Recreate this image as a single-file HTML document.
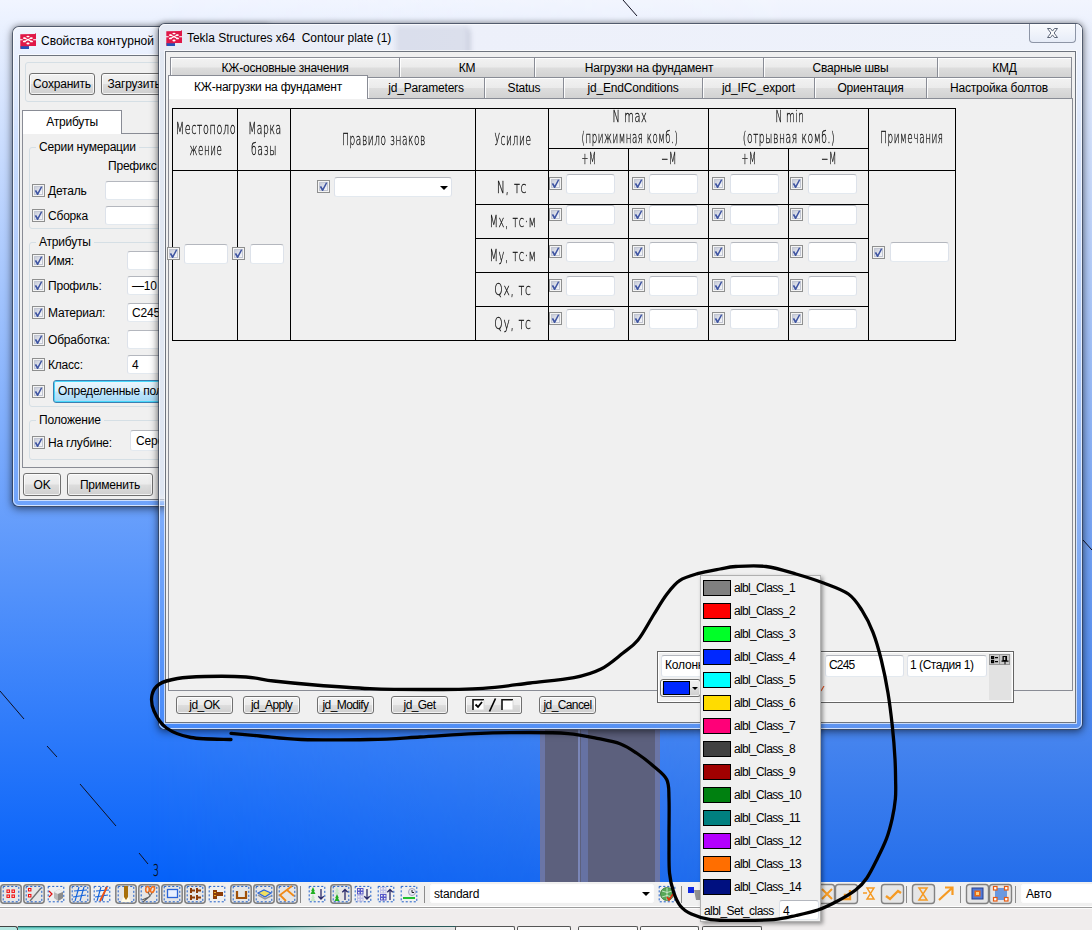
<!DOCTYPE html><html lang="ru"><head><meta charset="utf-8"><title>Tekla Structures</title><style>
html,body{margin:0;padding:0}
body{width:1092px;height:930px;overflow:hidden;position:relative;background:#f0eded;
 font-family:"Liberation Sans",sans-serif;font-size:12px;color:#000;letter-spacing:-0.2px}
.a{position:absolute;box-sizing:border-box}
.t{position:absolute;white-space:nowrap;line-height:14px}
#view{left:0;top:0;width:1092px;height:882px;background:linear-gradient(#f1f5ff,#0561f9)}
.win{border:1px solid rgba(30,40,60,.75);border-radius:7px 7px 6px 6px;
 box-shadow:0 2px 9px 0 rgba(0,0,0,.5),0 -1px 5px rgba(0,0,0,.18)}
.glass{border-radius:6px;border:1px solid rgba(255,255,255,.7)}
.client{background:#f0f0f0;border:1px solid #6e747e;box-shadow:0 0 0 1px rgba(255,255,255,.65)}
.cb{position:absolute;box-sizing:border-box;width:13px;height:13px;border:1px solid #8e8f8f;
 background:linear-gradient(135deg,#c9cdda 20%,#f6f7fa 80%);box-shadow:inset 0 0 0 1px #f4f4f4, inset 0 0 0 2px #c2c6d2}
.cb:after{content:"";position:absolute;left:0;top:0;width:11px;height:11px;background:#3f55a2;clip-path:polygon(1.7px 5.8px,3.2px 5px,4.7px 7.6px,7.9px 1.5px,9.4px 1.7px,5.1px 10px,4.1px 10px)}
.in{position:absolute;box-sizing:border-box;background:#fff;border:1px solid #dde2ea;border-top-color:#b4b7be;border-bottom-color:#e3e9ef;border-radius:3px}
.btn{position:absolute;box-sizing:border-box;border:1px solid #707070;border-radius:3px;
 background:linear-gradient(#f2f2f2 0,#ebebeb 48%,#dddddd 52%,#cfcfcf 100%);box-shadow:inset 0 0 0 1px rgba(255,255,255,.75);
 text-align:center;white-space:nowrap}
.tab{position:absolute;box-sizing:border-box;border:1px solid #898c95;border-bottom:none;
 background:linear-gradient(#f2f2f2 0,#ebebeb 48%,#dddddd 52%,#d2d2d2 100%);text-align:center;white-space:nowrap;line-height:21px;box-shadow:inset 1px 1px 0 rgba(255,255,255,.9)}
.tabsel{background:#fff;border-color:#898c95}
.g{font-family:"Liberation Sans",sans-serif;letter-spacing:0;color:#222}
.gt{position:absolute;white-space:nowrap;text-align:center;line-height:16px;font-family:"DejaVu Sans","Liberation Sans",sans-serif;font-weight:200;font-size:15.5px;letter-spacing:1px;color:#000;-webkit-text-stroke:.3px #1a1a1a;
 transform:scaleX(.62);transform-origin:50% 50%}
.ln{position:absolute;background:#000}
.grp{position:absolute;box-sizing:border-box;border:1px solid #d5dfe5;border-radius:3px}
.sw{position:absolute;box-sizing:border-box;border:1px solid #000;width:28px;height:16px}
</style></head><body>
<div id="view" class="a"></div>
<div class="a" style="left:0;top:0;width:1092px;height:882px;background:linear-gradient(#f2f5fe,#246eeb);-webkit-mask-image:linear-gradient(90deg,transparent 150px,#000 800px);mask-image:linear-gradient(90deg,transparent 150px,#000 800px)"></div>
<svg class="a" style="left:0;top:0" width="1092" height="882" viewBox="0 0 1092 882"><g stroke="#101020" stroke-width="1" fill="none"><path d="M623 0L637 16"/><path d="M0 691L24 719"/><path d="M47 746L57 757"/><path d="M80 784L116 826"/><path d="M139 853L148 864"/><path d="M1083 540L1092 550"/></g><rect x="540" y="729" width="120" height="153" fill="#5c607d"/><rect x="540" y="729" width="5" height="153" fill="#6a75a6"/><rect x="655" y="729" width="5" height="153" fill="#6a75a6"/><rect x="578" y="729" width="2" height="153" fill="#7a86b8"/><rect x="581" y="729" width="7" height="153" fill="#6672a3"/><text x="153" y="876" font-family="DejaVu Sans,Liberation Sans,sans-serif" font-weight="200" font-size="15" fill="#000" stroke="#111" stroke-width=".3" transform="translate(153 0) scale(.62 1) translate(-153 0)">3</text></svg>
<div class="a win" style="left:12px;top:26px;width:260px;height:481px;background:linear-gradient(rgba(255,255,255,.3),rgba(255,255,255,.06) 120px,rgba(255,255,255,.04))"></div>
<div class="a glass" style="left:13px;top:27px;width:258px;height:479px"></div>
<svg class="a" style="left:20px;top:33px" width="17" height="17" viewBox="0 0 17 17"><path d="M0.300 1.200 L15 1 L15.700 0 L16 0.500 L16 13 L9 13 L9 16 L0.300 16 Z" fill="#e01848"/><path d="M0.300 13.200 H9 V16 H1 Z" fill="#2450b8"/><path d="M0 6.700H2.700M13.200 6.700H16M4.400 5.100L11.500 8.400M11.400 5.100L4.400 8.400" stroke="#fff" stroke-width="1.100" fill="none"/><g fill="#fff"><ellipse cx="8" cy="3.500" rx="1.600" ry=".85"/><ellipse cx="4.400" cy="5.100" rx="1.500" ry=".85"/><ellipse cx="11.400" cy="5.100" rx="1.500" ry=".85"/><ellipse cx="4.400" cy="8.400" rx="1.500" ry=".85"/><ellipse cx="11.500" cy="8.400" rx="1.500" ry=".85"/><ellipse cx="8" cy="10.500" rx="1.600" ry=".9"/></g></svg>
<div class="t" style="left:41px;top:34px;letter-spacing:0">Свойства контурной</div>
<div class="a client" style="left:19px;top:55px;width:246px;height:445px"></div>
<div class="grp" style="left:25px;top:62px;width:240px;height:40px"></div>
<div class="btn" style="left:29px;top:73px;width:66px;height:22px;line-height:21px">Сохранить</div>
<div class="btn" style="left:101px;top:73px;width:66px;height:22px;line-height:21px">Загрузить</div>
<div class="a" style="left:22px;top:133px;width:243px;height:335px;border:1px solid #898c95"></div>
<div class="tab tabsel" style="left:22px;top:110px;width:100px;height:24px;line-height:22px">Атрибуты</div>
<div class="grp" style="left:29px;top:147px;width:236px;height:82px"></div>
<div class="t" style="left:36px;top:140px;background:#f0f0f0;padding:0 3px">Серии нумерации</div>
<div class="t" style="left:108px;top:159px">Префикс</div>
<div class="cb" style="left:32px;top:184px"></div><div class="t" style="left:48px;top:184px">Деталь</div><div class="in" style="left:105px;top:181px;width:160px;height:19px"></div>
<div class="cb" style="left:32px;top:209px"></div><div class="t" style="left:48px;top:209px">Сборка</div><div class="in" style="left:105px;top:206px;width:160px;height:19px"></div>
<div class="grp" style="left:29px;top:242px;width:236px;height:165px"></div>
<div class="t" style="left:36px;top:235px;background:#f0f0f0;padding:0 3px">Атрибуты</div>
<div class="cb" style="left:32px;top:254px"></div><div class="t" style="left:48px;top:254px">Имя:</div>
<div class="in" style="left:127px;top:251px;width:140px;height:19px"></div><div class="t" style="left:132px;top:254px"></div>
<div class="cb" style="left:32px;top:279px"></div><div class="t" style="left:48px;top:279px">Профиль:</div>
<div class="in" style="left:127px;top:276px;width:140px;height:19px"></div><div class="t" style="left:132px;top:279px">—10</div>
<div class="cb" style="left:32px;top:306px"></div><div class="t" style="left:48px;top:306px">Материал:</div>
<div class="in" style="left:127px;top:303px;width:140px;height:19px"></div><div class="t" style="left:132px;top:306px">C245</div>
<div class="cb" style="left:32px;top:333px"></div><div class="t" style="left:48px;top:333px">Обработка:</div>
<div class="in" style="left:127px;top:330px;width:140px;height:19px"></div><div class="t" style="left:132px;top:333px"></div>
<div class="cb" style="left:32px;top:358px"></div><div class="t" style="left:48px;top:358px">Класс:</div>
<div class="in" style="left:127px;top:355px;width:140px;height:19px"></div><div class="t" style="left:132px;top:358px">4</div>
<div class="cb" style="left:32px;top:385px"></div>
<div class="btn" style="left:53px;top:380px;width:140px;height:23px;line-height:21px;text-align:left;padding-left:4px;border-color:#3c7fb1;background:linear-gradient(#eaf6fd 0,#d9f0fc 48%,#bee6fd 52%,#a7d9f5 100%);box-shadow:inset 0 0 0 1px #48d8fb">Определенные пользователем</div>
<div class="grp" style="left:29px;top:420px;width:236px;height:40px"></div>
<div class="t" style="left:36px;top:413px;background:#f0f0f0;padding:0 3px">Положение</div>
<div class="cb" style="left:32px;top:436px"></div><div class="t" style="left:48px;top:436px">На глубине:</div>
<div class="in" style="left:130px;top:430px;width:135px;height:21px"></div><div class="t" style="left:136px;top:434px">Середина</div>
<div class="btn" style="left:23px;top:473px;width:38px;height:23px;line-height:23px">OK</div>
<div class="btn" style="left:67px;top:473px;width:86px;height:23px;line-height:23px">Применить</div>
<div class="a win" style="left:158px;top:23px;width:925px;height:707px;background:linear-gradient(rgba(255,255,255,.35),rgba(255,255,255,.18) 120px,rgba(255,255,255,.12))"></div>
<div class="a" style="left:159px;top:24px;width:923px;height:28px;border-radius:6px 6px 0 0;background:linear-gradient(90deg,#e6eaf4 0,#e9edf7 120px,#edf0fa 300px,#eef2fb)"></div>
<div class="a" style="left:396px;top:26px;width:74px;height:30px;border-radius:0 7px 0 0;background:rgba(120,130,160,.15);border-right:2px solid rgba(90,100,130,.3);filter:blur(2.5px)"></div>
<div class="a" style="left:159px;top:52px;width:7px;height:455px;background:linear-gradient(#e2e8f2 0,#dfe6f2 97%,rgba(223,230,242,0))"></div>
<div class="a glass" style="left:159px;top:24px;width:923px;height:705px"></div>
<svg class="a" style="left:166px;top:30px" width="17" height="17" viewBox="0 0 17 17"><path d="M0.300 1.200 L15 1 L15.700 0 L16 0.500 L16 13 L9 13 L9 16 L0.300 16 Z" fill="#e01848"/><path d="M0.300 13.200 H9 V16 H1 Z" fill="#2450b8"/><path d="M0 6.700H2.700M13.200 6.700H16M4.400 5.100L11.500 8.400M11.400 5.100L4.400 8.400" stroke="#fff" stroke-width="1.100" fill="none"/><g fill="#fff"><ellipse cx="8" cy="3.500" rx="1.600" ry=".85"/><ellipse cx="4.400" cy="5.100" rx="1.500" ry=".85"/><ellipse cx="11.400" cy="5.100" rx="1.500" ry=".85"/><ellipse cx="4.400" cy="8.400" rx="1.500" ry=".85"/><ellipse cx="11.500" cy="8.400" rx="1.500" ry=".85"/><ellipse cx="8" cy="10.500" rx="1.600" ry=".9"/></g></svg>
<div class="t" style="left:187px;top:31px;letter-spacing:-.03px">Tekla Structures x64&nbsp; Contour plate (1)</div>
<div class="a" style="left:1029px;top:24px;width:47px;height:19px;border:1px solid #8d95a6;border-top:none;border-radius:0 0 4px 4px;background:linear-gradient(rgba(255,255,255,.7),rgba(225,232,245,.6))"></div>
<svg class="a" style="left:1046px;top:27px" width="13" height="12" viewBox="0 0 13 12"><path d="M1.5 1.5h3l2 2.6 2-2.6h3l-3.4 4.5 3.4 4.5h-3l-2-2.6-2 2.6h-3l3.400-4.500z" fill="#fff" stroke="#5d6678" stroke-width="1"/></svg>
<div class="a client" style="left:165px;top:51px;width:911px;height:672px"></div>
<div class="tab" style="left:170px;top:57px;width:230px;height:20px">КЖ-основные значения</div>
<div class="tab" style="left:399px;top:57px;width:136px;height:20px">КМ</div>
<div class="tab" style="left:534px;top:57px;width:230px;height:20px">Нагрузки на фундамент</div>
<div class="tab" style="left:763px;top:57px;width:175px;height:20px">Сварные швы</div>
<div class="tab" style="left:937px;top:57px;width:135px;height:20px">КМД</div>
<div class="tab" style="left:367px;top:77px;width:118px;height:21px">jd_Parameters</div>
<div class="tab" style="left:484px;top:77px;width:80px;height:21px">Status</div>
<div class="tab" style="left:563px;top:77px;width:140px;height:21px">jd_EndConditions</div>
<div class="tab" style="left:702px;top:77px;width:113px;height:21px">jd_IFC_export</div>
<div class="tab" style="left:814px;top:77px;width:113px;height:21px">Ориентация</div>
<div class="tab" style="left:926px;top:77px;width:146px;height:21px">Настройка болтов</div>
<div class="a" style="left:168px;top:98px;width:905px;height:593px;border:1px solid #898c95"></div>
<div class="tab tabsel" style="left:168px;top:75px;width:200px;height:24px;line-height:22px">КЖ-нагрузки на фундамент</div>
<div class="ln" style="left:172px;top:108px;width:784px;height:1px"></div>
<div class="ln" style="left:548px;top:148px;width:321px;height:1px"></div>
<div class="ln" style="left:172px;top:170px;width:784px;height:1px"></div>
<div class="ln" style="left:172px;top:340px;width:784px;height:1px"></div>
<div class="ln" style="left:475px;top:204px;width:394px;height:1px"></div>
<div class="ln" style="left:475px;top:238px;width:394px;height:1px"></div>
<div class="ln" style="left:475px;top:272px;width:394px;height:1px"></div>
<div class="ln" style="left:475px;top:306px;width:394px;height:1px"></div>
<div class="ln" style="left:172px;top:108px;width:1px;height:233px"></div>
<div class="ln" style="left:237px;top:108px;width:1px;height:233px"></div>
<div class="ln" style="left:290px;top:108px;width:1px;height:233px"></div>
<div class="ln" style="left:475px;top:108px;width:1px;height:233px"></div>
<div class="ln" style="left:548px;top:108px;width:1px;height:233px"></div>
<div class="ln" style="left:708px;top:108px;width:1px;height:233px"></div>
<div class="ln" style="left:868px;top:108px;width:1px;height:233px"></div>
<div class="ln" style="left:955px;top:108px;width:1px;height:233px"></div>
<div class="ln" style="left:628px;top:148px;width:1px;height:193px"></div>
<div class="ln" style="left:788px;top:148px;width:1px;height:193px"></div>
<div class="gt" style="left:55.7px;top:121px;width:300px;transform:scaleX(0.622)">Местополо</div>
<div class="gt" style="left:55.7px;top:142px;width:300px;transform:scaleX(0.562)">жение</div>
<div class="gt" style="left:114.5px;top:121px;width:300px;transform:scaleX(0.595)">Марка</div>
<div class="gt" style="left:113.9px;top:142px;width:300px;transform:scaleX(0.606)">базы</div>
<div class="gt" style="left:233.7px;top:132px;width:300px;transform:scaleX(0.579)">Правило знаков</div>
<div class="gt" style="left:363.3px;top:132px;width:300px;transform:scaleX(0.582)">Усилие</div>
<div class="gt" style="left:480.1px;top:109px;width:300px;transform:scaleX(0.630)">N max</div>
<div class="gt" style="left:479.5px;top:130px;width:300px;transform:scaleX(0.557)">(прижимная комб.)</div>
<div class="gt" style="left:639.5px;top:109px;width:300px;transform:scaleX(0.573)">N min</div>
<div class="gt" style="left:638.9px;top:130px;width:300px;transform:scaleX(0.596)">(отрывная комб.)</div>
<div class="gt" style="left:439.4px;top:151px;width:300px;transform:scaleX(0.526)">+М</div>
<div class="gt" style="left:518.8px;top:151px;width:300px;transform:scaleX(0.555)">−М</div>
<div class="gt" style="left:598.6px;top:151px;width:300px;transform:scaleX(0.526)">+М</div>
<div class="gt" style="left:679.3px;top:151px;width:300px;transform:scaleX(0.555)">−М</div>
<div class="gt" style="left:761.9px;top:130px;width:300px;transform:scaleX(0.570)">Примечания</div>
<div class="gt" style="left:362.3px;top:180px;width:300px;transform:scaleX(0.699)">N, тс</div>
<div class="gt" style="left:363.1px;top:214px;width:300px;transform:scaleX(0.636)">Mx, тс·м</div>
<div class="gt" style="left:363.1px;top:248px;width:300px;transform:scaleX(0.636)">My, тс·м</div>
<div class="gt" style="left:363.3px;top:282px;width:300px;transform:scaleX(0.687)">Qx, тс</div>
<div class="gt" style="left:363.3px;top:316px;width:300px;transform:scaleX(0.687)">Qy, тс</div>
<div class="cb" style="left:167px;top:247px"></div><div class="in" style="left:184px;top:244px;width:44px;height:20px"></div>
<div class="cb" style="left:232px;top:247px"></div><div class="in" style="left:250px;top:244px;width:34px;height:20px"></div>
<div class="cb" style="left:317px;top:180px"></div><div class="in" style="left:334px;top:177px;width:118px;height:20px"></div>
<div class="a" style="left:439.5px;top:186px;width:0;height:0;border:4px solid transparent;border-top:4px solid #000;border-bottom:none"></div>
<div class="cb" style="left:549px;top:177px"></div><div class="in" style="left:566px;top:174px;width:49px;height:20px"></div>
<div class="cb" style="left:632px;top:177px"></div><div class="in" style="left:649px;top:174px;width:49px;height:20px"></div>
<div class="cb" style="left:712px;top:177px"></div><div class="in" style="left:730px;top:174px;width:49px;height:20px"></div>
<div class="cb" style="left:790px;top:177px"></div><div class="in" style="left:808px;top:174px;width:49px;height:20px"></div>
<div class="cb" style="left:549px;top:208px"></div><div class="in" style="left:566px;top:205px;width:49px;height:20px"></div>
<div class="cb" style="left:632px;top:208px"></div><div class="in" style="left:649px;top:205px;width:49px;height:20px"></div>
<div class="cb" style="left:712px;top:208px"></div><div class="in" style="left:730px;top:205px;width:49px;height:20px"></div>
<div class="cb" style="left:790px;top:208px"></div><div class="in" style="left:808px;top:205px;width:49px;height:20px"></div>
<div class="cb" style="left:549px;top:245px"></div><div class="in" style="left:566px;top:242px;width:49px;height:20px"></div>
<div class="cb" style="left:632px;top:245px"></div><div class="in" style="left:649px;top:242px;width:49px;height:20px"></div>
<div class="cb" style="left:712px;top:245px"></div><div class="in" style="left:730px;top:242px;width:49px;height:20px"></div>
<div class="cb" style="left:790px;top:245px"></div><div class="in" style="left:808px;top:242px;width:49px;height:20px"></div>
<div class="cb" style="left:549px;top:279px"></div><div class="in" style="left:566px;top:276px;width:49px;height:20px"></div>
<div class="cb" style="left:632px;top:279px"></div><div class="in" style="left:649px;top:276px;width:49px;height:20px"></div>
<div class="cb" style="left:712px;top:279px"></div><div class="in" style="left:730px;top:276px;width:49px;height:20px"></div>
<div class="cb" style="left:790px;top:279px"></div><div class="in" style="left:808px;top:276px;width:49px;height:20px"></div>
<div class="cb" style="left:549px;top:312px"></div><div class="in" style="left:566px;top:309px;width:49px;height:20px"></div>
<div class="cb" style="left:632px;top:312px"></div><div class="in" style="left:649px;top:309px;width:49px;height:20px"></div>
<div class="cb" style="left:712px;top:312px"></div><div class="in" style="left:730px;top:309px;width:49px;height:20px"></div>
<div class="cb" style="left:790px;top:312px"></div><div class="in" style="left:808px;top:309px;width:49px;height:20px"></div>
<div class="cb" style="left:872px;top:246px"></div><div class="in" style="left:890px;top:242px;width:59px;height:20px"></div>
<div class="btn" style="left:176px;top:696px;width:57px;height:18px;line-height:17px;border-radius:3px;letter-spacing:-.6px">jd_OK</div>
<div class="btn" style="left:243px;top:696px;width:57px;height:18px;line-height:17px;border-radius:3px;letter-spacing:-.6px">jd_Apply</div>
<div class="btn" style="left:317px;top:696px;width:57px;height:18px;line-height:17px;border-radius:3px;letter-spacing:-.6px">jd_Modify</div>
<div class="btn" style="left:391px;top:696px;width:57px;height:18px;line-height:17px;border-radius:3px;letter-spacing:-.6px">jd_Get</div>
<div class="btn" style="left:539px;top:696px;width:57px;height:18px;line-height:17px;border-radius:3px;letter-spacing:-.6px">jd_Cancel</div>
<div class="btn" style="left:465px;top:696px;width:57px;height:18px;border-radius:2px"></div>
<svg class="a" style="left:465px;top:696px" width="57" height="18" viewBox="0 0 57 18"><rect x="8" y="3" width="11" height="11" fill="#fff"/><path d="M8 14V3.700H19" stroke="#111" stroke-width="1.600" fill="none"/><path d="M19 4V14H9" stroke="#d8d8d8" stroke-width="1" fill="none"/><path d="M10.500 8.500l2.500 2.500 4-5" stroke="#000" stroke-width="1.800" fill="none"/><path d="M24.500 15.500L30.500 2.500" stroke="#000" stroke-width="1.700"/><rect x="37" y="3" width="11" height="11" fill="#fff"/><path d="M37 14V3.700H48" stroke="#111" stroke-width="1.600" fill="none"/><path d="M48 4V14H38" stroke="#d8d8d8" stroke-width="1" fill="none"/></svg>
<div class="a" style="left:657px;top:651px;width:357px;height:52px;background:#f0f0f0;border:1px solid #646464;box-shadow:inset 0 0 0 1px #fff"></div>
<div class="in" style="left:661px;top:655px;width:160px;height:22px"></div><div class="t" style="left:665px;top:658px">Колонна</div>
<div class="in" style="left:825px;top:655px;width:79px;height:22px"></div><div class="t" style="left:829px;top:658px;letter-spacing:-.8px">C245</div>
<div class="in" style="left:907px;top:655px;width:80px;height:22px"></div><div class="t" style="left:910px;top:658px;letter-spacing:-.45px">1 (Стадия 1)</div>
<div class="a" style="left:989px;top:654px;width:22px;height:46px;background:#e2e2e2"></div>
<svg class="a" style="left:989px;top:654px" width="22" height="12" viewBox="0 0 22 12"><rect x=".5" y=".5" width="10" height="10" fill="#c8c8c8" stroke="#969696"/><rect x="10.500" y=".5" width="10" height="10" fill="#c8c8c8" stroke="#969696"/><g fill="none" stroke="#000" stroke-width="1.200"><rect x="2.600" y="2.600" width="2" height="2"/><rect x="2.600" y="6.600" width="2" height="2"/><path d="M6 3.600h3M6 7.600h3"/></g><path d="M13.500 2h4.500v4.500h1.500v1.200h-3v2.500h-1v-2.500h-3v-1.200h1z" fill="#000"/><rect x="14.800" y="3" width="1.500" height="3" fill="#c8c8c8"/></svg>
<div class="btn" style="left:660px;top:679px;width:41px;height:18px;border-radius:3px"></div>
<div class="a" style="left:663px;top:681px;width:27px;height:14px;background:#0028ff;border:1px solid #000"></div>
<div class="a" style="left:692px;top:687px;width:0;height:0;border:3px solid transparent;border-top:3px solid #000;border-bottom:none"></div>
<svg class="a" style="left:821px;top:686px" width="4" height="6" viewBox="0 0 4 6"><path d="M0 5L3 0" stroke="#e05020" stroke-width="1.100"/></svg>
<div class="a" style="left:0;top:882px;width:1092px;height:24px;background:#f0f0f0"></div>
<div class="a" style="left:0;top:906px;width:1092px;height:1px;background:#fff"></div>
<div class="a" style="left:0;top:907px;width:1092px;height:1px;background:#9c9c9c"></div>
<div class="a" style="left:0;top:908px;width:1092px;height:1px;background:#fbfbfb"></div>
<div class="a" style="left:18px;top:926px;width:440px;height:4px;background:linear-gradient(90deg,rgba(240,237,237,0) 0,rgba(240,237,237,0) 55%,#d8d8d8 72%,#e6e6e6 100%),linear-gradient(#3a9a96 0,#72d2c8 35%,#96e2da);border-top:1px solid #2a5a5a"></div>
<div class="a" style="left:0;top:926px;width:18px;height:5px;background:#b4e6e0;border:1px solid #444;border-left:none;border-bottom:none;border-radius:0 3px 0 0"></div>
<div class="a" style="left:455px;top:926px;width:60px;height:5px;background:#fafafa;border:1px solid #555;border-bottom:none;border-radius:2px 2px 0 0"></div>
<div class="a" style="left:517px;top:926px;width:54px;height:5px;background:#fafafa;border:1px solid #555;border-bottom:none;border-radius:2px 2px 0 0"></div>
<div class="a" style="left:578px;top:926px;width:60px;height:5px;background:#fafafa;border:1px solid #555;border-bottom:none;border-radius:2px 2px 0 0"></div>
<div class="a" style="left:640px;top:926px;width:59px;height:5px;background:#fafafa;border:1px solid #555;border-bottom:none;border-radius:2px 2px 0 0"></div>
<div class="a" style="left:702px;top:926px;width:60px;height:5px;background:#fafafa;border:1px solid #555;border-bottom:none;border-radius:2px 2px 0 0"></div>
<svg class="a" style="left:0;top:882px" width="1092" height="24" viewBox="0 0 1092 24"><rect x="0.8" y="2.800" width="20.400" height="18.400" rx="3" fill="#e6e6e6" stroke="#808080" stroke-width="1.500"/><rect x="3.2" y="4.400" width="15.600" height="15.400" fill="none" stroke="#1458c8" stroke-width=".95" stroke-dasharray="2.100 1.900"/><g transform="translate(3 4)"><rect x="4.0" y="4.0" width="2.400" height="2.400" fill="#fff" stroke="#f01010" stroke-width="1.100"/><rect x="9.0" y="4.0" width="2.400" height="2.400" fill="#fff" stroke="#f01010" stroke-width="1.100"/><rect x="4.0" y="9.0" width="2.400" height="2.400" fill="#fff" stroke="#f01010" stroke-width="1.100"/><rect x="9.0" y="9.0" width="2.400" height="2.400" fill="#fff" stroke="#f01010" stroke-width="1.100"/></g><rect x="23.8" y="2.800" width="20.400" height="18.400" rx="3" fill="#e6e6e6" stroke="#808080" stroke-width="1.500"/><rect x="26.2" y="4.400" width="15.600" height="15.400" fill="none" stroke="#1458c8" stroke-width=".95" stroke-dasharray="2.100 1.900"/><g transform="translate(26 4)"><rect x="2.5" y="2.5" width="2.400" height="2.400" fill="#fff" stroke="#f01010" stroke-width="1.100"/><rect x="2.5" y="8.5" width="2.400" height="2.400" fill="#fff" stroke="#f01010" stroke-width="1.100"/><path d="M4 15L15 2" stroke="#707070" stroke-width="1.3"/></g><rect x="48.2" y="4.400" width="15.600" height="15.400" fill="none" stroke="#1458c8" stroke-width=".95" stroke-dasharray="2.100 1.900"/><g transform="translate(48 4)"><path d="M1 5l3 3-3 3" stroke="#e01010" stroke-width="1.2" fill="none"/><path d="M6 6l5-3 4 3v6l-5 3-4-3z" fill="#b8b8b8"/><path d="M6 6l5-3 4 3-5 2z" fill="#eee"/><path d="M10 8l5-2v6l-5 3z" fill="#8c8c8c"/></g><rect x="69.8" y="2.800" width="20.400" height="18.400" rx="3" fill="#e6e6e6" stroke="#808080" stroke-width="1.500"/><rect x="72.2" y="4.400" width="15.600" height="15.400" fill="none" stroke="#1458c8" stroke-width=".95" stroke-dasharray="2.100 1.900"/><g transform="translate(72 4)"><g stroke="#1464dc" stroke-width="1.150" fill="none"><path d="M7 1L3 15"/><path d="M12 1L8 15"/><path d="M2 5L15 4"/><path d="M1 11L14 9"/></g></g><rect x="94.2" y="4.400" width="15.600" height="15.400" fill="none" stroke="#1458c8" stroke-width=".95" stroke-dasharray="2.100 1.900"/><g transform="translate(94 4)"><g stroke="#1464dc" stroke-width="1.150" fill="none"><path d="M7 1L3 15"/><path d="M12 1L8 15"/><path d="M2 5L15 4"/><path d="M1 11L14 9"/></g><path d="M13 1L6 15" stroke="#f05010" stroke-width="1.8"/></g><rect x="115.8" y="2.800" width="20.400" height="18.400" rx="3" fill="#e6e6e6" stroke="#808080" stroke-width="1.500"/><rect x="118.2" y="4.400" width="15.600" height="15.400" fill="none" stroke="#1458c8" stroke-width=".95" stroke-dasharray="2.100 1.900"/><g transform="translate(118 4)"><path d="M3 16L6 10h4l3 6z" fill="#fffbe8"/><rect x="6" y="0" width="4" height="11" fill="#a87008"/><path d="M6 11h4l-2 3z" fill="#a87008"/></g><rect x="138.8" y="2.800" width="20.400" height="18.400" rx="3" fill="#e6e6e6" stroke="#808080" stroke-width="1.500"/><rect x="141.2" y="4.400" width="15.600" height="15.400" fill="none" stroke="#1458c8" stroke-width=".95" stroke-dasharray="2.100 1.900"/><g transform="translate(141 4)"><g fill="none" stroke="#f07020" stroke-width="1.6"><ellipse cx="6.500" cy="3.500" rx="1.800" ry="3"/><ellipse cx="11.500" cy="3.500" rx="1.800" ry="3" transform="rotate(20 11.500 3.500)"/></g><path d="M7 6L9 10L2 16M11 7L8 11L1 14" stroke="#606060" stroke-width="1.100" fill="none"/></g><rect x="161.8" y="2.800" width="20.400" height="18.400" rx="3" fill="#e6e6e6" stroke="#808080" stroke-width="1.500"/><rect x="164.2" y="4.400" width="15.600" height="15.400" fill="none" stroke="#1458c8" stroke-width=".95" stroke-dasharray="2.100 1.900"/><g transform="translate(164 4)"><rect x="3.500" y="3.500" width="10" height="8" fill="#e8f0ff" stroke="#2a64d8" stroke-width="1.300"/></g><rect x="184.8" y="2.800" width="20.400" height="18.400" rx="3" fill="#e6e6e6" stroke="#808080" stroke-width="1.500"/><rect x="187.2" y="4.400" width="15.600" height="15.400" fill="none" stroke="#1458c8" stroke-width=".95" stroke-dasharray="2.100 1.900"/><g transform="translate(187 4)"><g transform="translate(3 2)"><path d="M0 0h2v1.500h3v2h-3v1.500h-2z" fill="#8c3c08"/></g><g transform="translate(9 2)"><path d="M0 0h2v1.500h3v2h-3v1.500h-2z" fill="#8c3c08"/></g><g transform="translate(3 9)"><path d="M0 0h2v1.500h3v2h-3v1.500h-2z" fill="#8c3c08"/></g><g transform="translate(9 9)"><path d="M0 0h2v1.500h3v2h-3v1.500h-2z" fill="#8c3c08"/></g></g><rect x="209.2" y="4.400" width="15.600" height="15.400" fill="none" stroke="#1458c8" stroke-width=".95" stroke-dasharray="2.100 1.900"/><g transform="translate(209 4)"><path d="M4 4h4v2h6v4h-6v3h-4z" fill="#8c3c08"/><path d="M5 6h2v1h-2zM5 9h2v1h-2z" fill="#f0b020"/></g><rect x="230.8" y="2.800" width="20.400" height="18.400" rx="3" fill="#e6e6e6" stroke="#808080" stroke-width="1.500"/><rect x="233.2" y="4.400" width="15.600" height="15.400" fill="none" stroke="#1458c8" stroke-width=".95" stroke-dasharray="2.100 1.900"/><g transform="translate(233 4)"><path d="M4 5v7h9v-7" fill="none" stroke="#a05008" stroke-width="2.200"/></g><rect x="253.8" y="2.800" width="20.400" height="18.400" rx="3" fill="#e6e6e6" stroke="#808080" stroke-width="1.500"/><rect x="256.2" y="4.400" width="15.600" height="15.400" fill="none" stroke="#1458c8" stroke-width=".95" stroke-dasharray="2.100 1.900"/><g transform="translate(256 4)"><path d="M2 7l6-3 7 3-6 4z" fill="#f0e060" stroke="#2a64d8" stroke-width="1.200"/><path d="M2 9l7 4 6-3" stroke="#9a9a9a" stroke-width="1.500" fill="none"/></g><rect x="276.8" y="2.800" width="20.400" height="18.400" rx="3" fill="#e6e6e6" stroke="#808080" stroke-width="1.500"/><rect x="279.2" y="4.400" width="15.600" height="15.400" fill="none" stroke="#1458c8" stroke-width=".95" stroke-dasharray="2.100 1.900"/><g transform="translate(279 4)"><path d="M13 0L1 9l6 6M8 4l7 6" stroke="#f08a18" stroke-width="1.800" fill="none"/></g><rect x="300" y="4" width="1" height="17" fill="#8c8c8c"/><rect x="309.2" y="4.400" width="15.600" height="15.400" fill="none" stroke="#1458c8" stroke-width=".95" stroke-dasharray="2.100 1.900"/><g transform="translate(309 4)"><path d="M4 1 l1.800 4 h-0.800 l1.500 3 h-5 l1.500-3 h-0.800z" fill="#20b020"/><path d="M4 8 l1.800 4 h-0.800 l1.500 3 h-5 l1.500-3 h-0.800z" fill="#c8e8c8"/><path d="M12 3v10M9.300 10.200L12 13l2.700-2.800" stroke="#2a2a6a" stroke-width="1.300" fill="none"/></g><rect x="330.8" y="2.800" width="20.400" height="18.400" rx="3" fill="#e6e6e6" stroke="#808080" stroke-width="1.500"/><rect x="333.2" y="4.400" width="15.600" height="15.400" fill="none" stroke="#1458c8" stroke-width=".95" stroke-dasharray="2.100 1.900"/><g transform="translate(333 4)"><path d="M4 1 l1.800 4 h-0.800 l1.500 3 h-5 l1.500-3 h-0.800z" fill="#c8e8c8"/><path d="M4 8 l1.800 4 h-0.800 l1.500 3 h-5 l1.500-3 h-0.800z" fill="#20b020"/><path d="M12 14V3.500M9.300 6.300L12 3.500l2.700 2.800" stroke="#2a2a6a" stroke-width="1.300" fill="none"/></g><rect x="355.2" y="4.400" width="15.600" height="15.400" fill="none" stroke="#1458c8" stroke-width=".95" stroke-dasharray="2.100 1.900"/><g transform="translate(355 4)"><g fill="none" stroke="#5858c8" stroke-width="1"><rect x="2.500" y="2.5" width="2.500" height="2.500"/><rect x="5.500" y="2.5" width="2.500" height="2.500"/><rect x="2.500" y="5.5" width="2.500" height="2.500"/><rect x="5.500" y="5.5" width="2.500" height="2.500"/></g><g fill="none" stroke="#c0c0e8" stroke-width="1"><rect x="2.500" y="9.5" width="2.500" height="2.500"/><rect x="5.500" y="9.5" width="2.500" height="2.500"/><rect x="2.500" y="12.5" width="2.500" height="2.500"/><rect x="5.500" y="12.5" width="2.500" height="2.500"/></g><path d="M12 3v10M9.300 10.200L12 13l2.700-2.800" stroke="#2a2a6a" stroke-width="1.300" fill="none"/></g><rect x="378.2" y="4.400" width="15.600" height="15.400" fill="none" stroke="#1458c8" stroke-width=".95" stroke-dasharray="2.100 1.900"/><g transform="translate(378 4)"><g fill="none" stroke="#c0c0e8" stroke-width="1"><rect x="2.500" y="1.5" width="2.500" height="2.500"/><rect x="5.500" y="1.5" width="2.500" height="2.500"/><rect x="2.500" y="4.5" width="2.500" height="2.500"/><rect x="5.500" y="4.5" width="2.500" height="2.500"/></g><g fill="none" stroke="#5858c8" stroke-width="1"><rect x="2.500" y="8.5" width="2.500" height="2.500"/><rect x="5.500" y="8.5" width="2.500" height="2.500"/><rect x="2.500" y="11.5" width="2.500" height="2.500"/><rect x="5.500" y="11.5" width="2.500" height="2.500"/></g><path d="M12 14V3.500M9.300 6.300L12 3.500l2.700 2.800" stroke="#2a2a6a" stroke-width="1.300" fill="none"/></g><rect x="401.2" y="4.400" width="15.600" height="15.400" fill="none" stroke="#1458c8" stroke-width=".95" stroke-dasharray="2.100 1.900"/><g transform="translate(401 4)"><rect x="2" y="11" width="12" height="2" fill="#20c030"/><circle cx="11" cy="6" r="3.500" fill="#e8e8f4" stroke="#9090b0" stroke-width=".8"/><path d="M11 4v2.500h2" stroke="#202020" stroke-width="1" fill="none"/></g><rect x="424" y="4" width="1" height="17" fill="#8c8c8c"/><rect x="659.2" y="4.400" width="15.600" height="15.400" fill="none" stroke="#1458c8" stroke-width=".95" stroke-dasharray="2.100 1.900"/><g transform="translate(659 4)"><circle cx="8" cy="8" r="6.500" fill="#58a858" stroke="#2a6a2a" stroke-width=".8"/><path d="M3 5q5 3 10 0M3 11q5-3 10 0M8 1.500v13" stroke="#d8f0d8" stroke-width=".8" fill="none"/><path d="M8 11l2 3 4-6" stroke="#e03010" stroke-width="1.600" fill="none"/></g><rect x="681" y="4" width="1" height="17" fill="#8c8c8c"/><rect x="688" y="5" width="6" height="6" fill="#1028e0"/><path d="M694 8l6 0v10h-4z" fill="#909090"/><rect x="812.5" y="2.500" width="22" height="19" rx="3" fill="#e6e6e6" stroke="#828282" stroke-width="1.400"/><path d="M822 7l10 10M832 7l-10 10" stroke="#f59a23" stroke-width="2" fill="none"/><rect x="835.5" y="2.500" width="22" height="19" rx="3" fill="#e6e6e6" stroke="#828282" stroke-width="1.400"/><path d="M841 17h9v-9M850 13h-5v4" stroke="#f59a23" stroke-width="2.400" fill="none"/><path d="M863 11h4M867 6h7l-7 11h7z" stroke="#f59a23" stroke-width="1.400" fill="none" stroke-dasharray="none"/><rect x="881.5" y="2.500" width="22" height="19" rx="3" fill="#e6e6e6" stroke="#828282" stroke-width="1.400"/><path d="M886 14l4 3 8-8 3 2" stroke="#f59a23" stroke-width="2.400" fill="none"/><rect x="906" y="4" width="1" height="17" fill="#8c8c8c"/><rect x="912.5" y="2.500" width="22" height="19" rx="3" fill="#e6e6e6" stroke="#828282" stroke-width="1.400"/><path d="M919 6h8l-8 12h8z" stroke="#f59a23" stroke-width="1.500" fill="none"/><path d="M939 18L952 6M945 5.500h7.500V13" stroke="#f59a23" stroke-width="2.200" fill="none"/><rect x="960" y="4" width="1" height="17" fill="#8c8c8c"/><rect x="966.5" y="2.500" width="22" height="19" rx="3" fill="#e6e6e6" stroke="#828282" stroke-width="1.400"/><rect x="972" y="6" width="11" height="11" fill="#5078d8" stroke="#28408c" stroke-width="1"/><rect x="974.500" y="8.500" width="6" height="6" fill="#f06a10"/><rect x="976" y="10" width="3" height="3" fill="#ffd080"/><rect x="989.5" y="2.500" width="22" height="19" rx="3" fill="#e6e6e6" stroke="#828282" stroke-width="1.400"/><rect x="995" y="6" width="12" height="12" fill="#6a98e0"/><rect x="993.5" y="4.5" width="3.500" height="3.500" fill="#fff" stroke="#e85a10" stroke-width="1.200"/><rect x="1004.5" y="4.5" width="3.500" height="3.500" fill="#fff" stroke="#e85a10" stroke-width="1.200"/><rect x="993.5" y="15.5" width="3.500" height="3.500" fill="#fff" stroke="#e85a10" stroke-width="1.200"/><rect x="1004.5" y="15.5" width="3.500" height="3.500" fill="#fff" stroke="#e85a10" stroke-width="1.200"/><rect x="1015" y="4" width="1" height="17" fill="#8c8c8c"/></svg>
<div class="in" style="left:430px;top:884px;width:224px;height:19px;border-color:#fdfdfd;border-radius:2px"></div><div class="t" style="left:434px;top:887px">standard</div>
<div class="a" style="left:642px;top:892px;width:0;height:0;border:4px solid transparent;border-top:4px solid #000;border-bottom:none"></div>
<div class="in" style="left:1021px;top:884px;width:80px;height:19px;border-color:#fdfdfd;border-radius:2px"></div><div class="t" style="left:1026px;top:887px">Авто</div>
<div class="a" style="left:700px;top:575px;width:121px;height:347px;background:#f0f0f0;border:1px solid #b0b0b0;box-shadow:2px 2px 4px rgba(0,0,0,.4)"></div>
<div class="sw" style="left:703px;top:580px;background:#808080"></div><div class="t" style="left:734px;top:581px;letter-spacing:-.65px">albl_Class_1</div>
<div class="sw" style="left:703px;top:603px;background:#ff0000"></div><div class="t" style="left:734px;top:604px;letter-spacing:-.65px">albl_Class_2</div>
<div class="sw" style="left:703px;top:626px;background:#00ff28"></div><div class="t" style="left:734px;top:627px;letter-spacing:-.65px">albl_Class_3</div>
<div class="sw" style="left:703px;top:649px;background:#0028ff"></div><div class="t" style="left:734px;top:650px;letter-spacing:-.65px">albl_Class_4</div>
<div class="sw" style="left:703px;top:672px;background:#00ffff"></div><div class="t" style="left:734px;top:673px;letter-spacing:-.65px">albl_Class_5</div>
<div class="sw" style="left:703px;top:695px;background:#ffdc00"></div><div class="t" style="left:734px;top:696px;letter-spacing:-.65px">albl_Class_6</div>
<div class="sw" style="left:703px;top:718px;background:#ff0078"></div><div class="t" style="left:734px;top:719px;letter-spacing:-.65px">albl_Class_7</div>
<div class="sw" style="left:703px;top:741px;background:#404040"></div><div class="t" style="left:734px;top:742px;letter-spacing:-.65px">albl_Class_8</div>
<div class="sw" style="left:703px;top:764px;background:#a00000"></div><div class="t" style="left:734px;top:765px;letter-spacing:-.65px">albl_Class_9</div>
<div class="sw" style="left:703px;top:787px;background:#008010"></div><div class="t" style="left:734px;top:788px;letter-spacing:-.65px">albl_Class_10</div>
<div class="sw" style="left:703px;top:810px;background:#008080"></div><div class="t" style="left:734px;top:811px;letter-spacing:-.65px">albl_Class_11</div>
<div class="sw" style="left:703px;top:833px;background:#b400ff"></div><div class="t" style="left:734px;top:834px;letter-spacing:-.65px">albl_Class_12</div>
<div class="sw" style="left:703px;top:856px;background:#ff6e00"></div><div class="t" style="left:734px;top:857px;letter-spacing:-.65px">albl_Class_13</div>
<div class="sw" style="left:703px;top:879px;background:#001080"></div><div class="t" style="left:734px;top:880px;letter-spacing:-.65px">albl_Class_14</div>
<div class="t" style="left:704px;top:904px;letter-spacing:-.55px">albl_Set_class</div>
<div class="in" style="left:779px;top:900px;width:40px;height:20px"></div><div class="t" style="left:783px;top:904px">4</div>
<svg class="a" style="left:0;top:0" width="1092" height="930" viewBox="0 0 1092 930"><path fill="none" stroke="#000" stroke-width="3.3" stroke-linecap="round" stroke-linejoin="round" d="M231.0 739.5C224.3 739.2 201.8 739.4 191.0 737.5C180.2 735.6 172.7 732.4 166.5 728.0C160.3 723.6 156.4 716.5 154.0 711.0C151.6 705.5 151.1 699.5 152.0 695.0C152.9 690.5 155.3 686.8 159.6 684.0C163.8 681.2 169.9 679.8 177.5 678.5C185.1 677.2 193.6 676.8 205.0 676.5C216.4 676.2 234.6 676.2 246.0 677.0C257.4 677.8 262.1 679.7 273.6 681.0C285.1 682.3 298.9 683.7 315.0 685.0C331.1 686.3 351.7 687.9 370.0 688.6C388.3 689.4 406.2 689.5 425.0 689.5C443.8 689.5 465.5 689.4 483.0 688.3C500.5 687.2 514.8 684.8 530.0 683.0C545.2 681.2 562.2 679.9 574.0 677.6C585.8 675.3 592.8 673.1 601.0 669.0C609.2 664.9 616.8 657.8 623.0 653.0C629.2 648.2 632.9 646.3 638.0 640.0C643.1 633.7 648.7 622.7 653.5 615.0C658.3 607.3 662.6 599.7 667.0 594.0C671.4 588.3 674.5 584.0 679.6 580.6C684.7 577.2 690.8 575.6 697.5 573.7C704.2 571.8 713.6 570.2 720.0 569.0C726.4 567.8 728.0 566.9 735.7 566.5C743.4 566.1 756.0 565.2 766.0 566.5C776.0 567.8 786.4 571.2 796.0 574.0C805.6 576.8 814.9 579.7 823.6 583.0C832.3 586.3 842.0 589.4 848.4 594.0C854.8 598.6 857.9 604.0 862.0 610.4C866.1 616.8 869.8 624.1 873.0 632.4C876.2 640.7 878.8 649.9 881.3 660.0C883.8 670.1 886.2 682.0 888.0 693.0C889.8 704.0 891.1 715.0 892.3 726.0C893.5 737.0 894.5 750.0 895.0 759.0C895.5 768.0 895.5 773.4 895.6 780.0C895.7 786.6 896.0 792.3 895.4 798.7C894.8 805.1 893.7 812.0 892.2 818.6C890.7 825.2 889.1 831.8 886.6 838.4C884.1 845.0 880.8 851.7 877.5 858.3C874.2 864.9 870.4 872.9 866.7 878.2C863.1 883.5 860.8 886.0 855.6 890.0C850.4 894.0 842.0 898.7 835.7 902.0C829.4 905.3 824.4 907.8 817.8 910.0C811.2 912.2 803.3 913.9 796.0 915.5C788.7 917.1 782.5 918.8 773.8 919.6C765.1 920.4 754.1 920.4 743.6 920.4C733.1 920.4 719.4 920.7 710.7 919.6C702.0 918.5 696.5 916.3 691.4 914.0C686.3 911.7 683.4 909.7 680.4 906.0C677.4 902.3 675.4 897.5 673.6 892.0C671.8 886.5 670.3 881.7 669.5 873.0C668.7 864.3 669.1 852.4 669.0 840.0C668.9 827.6 669.4 808.8 669.0 798.7C668.6 788.6 669.4 785.0 666.7 779.5C664.0 774.0 658.0 770.1 653.0 765.7C648.0 761.3 642.0 756.7 636.5 753.0C631.0 749.3 626.3 746.1 620.0 743.7C613.7 741.3 607.3 740.3 598.6 738.6C589.9 736.9 579.4 734.6 568.0 733.6C556.6 732.6 545.5 732.5 530.0 732.5C514.5 732.5 493.3 732.9 475.0 733.6C456.7 734.4 437.5 736.0 420.0 737.0C402.5 738.0 389.8 739.1 370.0 739.5C350.2 739.9 319.3 740.1 301.0 739.5C282.7 738.9 271.7 737.0 260.0 736.0C248.3 735.0 235.8 733.8 231.0 733.4"/></svg>
</body></html>
